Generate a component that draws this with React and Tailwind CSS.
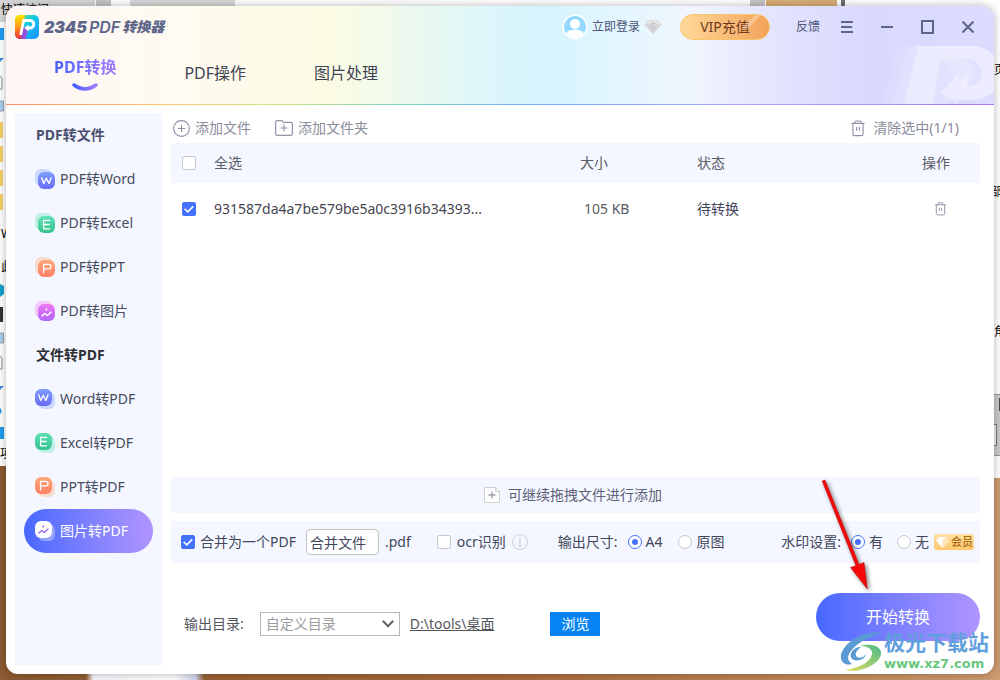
import { useState } from 'react';
import clsx from 'clsx';

const GROUPS = [
  {
    title: 'PDF转文件',
    titleClass: 'text-[#4b5070]',
    back: false,
    items: [
      { id: 'pdf-word', label: 'PDF转Word', kind: 'word' },
      { id: 'pdf-excel', label: 'PDF转Excel', kind: 'excel' },
      { id: 'pdf-ppt', label: 'PDF转PPT', kind: 'ppt' },
      { id: 'pdf-image', label: 'PDF转图片', kind: 'image' },
    ],
  },
  {
    title: '文件转PDF',
    titleClass: 'text-[#2e2f35]',
    back: true,
    items: [
      { id: 'word-pdf', label: 'Word转PDF', kind: 'word' },
      { id: 'excel-pdf', label: 'Excel转PDF', kind: 'excel' },
      { id: 'ppt-pdf', label: 'PPT转PDF', kind: 'ppt' },
      { id: 'image-pdf', label: '图片转PDF', kind: 'image' },
    ],
  },
];

const KINDS = {
  word: { from: '#7d9dff', to: '#6a6cf6', d: 'M4.6 6.500l2 5.700 2.600-5.200 2.600 5.200 2.200-5.700' },
  excel: { from: '#5fdfb6', to: '#35c48e', d: 'M12.5 5H6.5v8.500h6M6.500 9.200h5.500' },
  ppt: { from: '#ffa878', to: '#ff7f66', d: 'M6.5 13.5V5h5.200a2.300 2.300 0 0 1 0 4.600H6.500' },
  image: { from: '#ee78f4', to: '#b266f8', d: 'M4.800 12.800l2.800-2.600 2.600 2 3.800-3.400' },
};

const KindIcon = ({ id, kind, back, active }) => {
  const k = KINDS[kind];
  const offset = back ? 0 : 3;
  return (
    <svg width="20" height="20" viewBox="0 0 20 20" className="shrink-0" aria-hidden="true">
      <defs>
        <linearGradient id={id} x1="0" y1="0" x2="0" y2="1">
          <stop offset="0" stopColor={k.from} />
          <stop offset="1" stopColor={k.to} />
        </linearGradient>
      </defs>
      <rect
        x={back ? 3 : 0}
        y={back ? 3 : 0}
        width="17"
        height="17"
        rx="6"
        fill={active ? '#fff' : k.from}
        opacity="0.35"
      />
      <rect x={offset} y={offset} width="17" height="17" rx="6" fill={active ? '#fff' : `url(#${id})`} />
      <g transform={`translate(${offset - 0.9} ${offset - 0.7})`}>
        <path
          d={k.d}
          fill="none"
          stroke={active ? '#9a63f0' : '#fff'}
          strokeWidth="1.3"
          strokeLinecap="round"
          strokeLinejoin="round"
        />
        {kind === 'image' && <circle cx="9.2" cy="6.3" r="1" fill={active ? '#9a63f0' : '#fff'} />}
      </g>
    </svg>
  );
};

const TrashIcon = ({ className }) => (
  <svg viewBox="0 0 16 18" className={className} fill="none" stroke="#8f91a8" strokeWidth="1.2" aria-hidden="true">
    <path d="M1 3.6h14M4.8 3.4V2.2Q4.8 1 6 1h4q1.2 0 1.2 1.2v1.2M2.6 3.8v11Q2.6 16.6 4.4 16.6h7.2q1.8 0 1.8-1.8v-11M6.5 7.5v4M9.5 7.5v4" />
  </svg>
);

const Check = ({ id, label, ...props }) => (
  <span className="relative block size-[14px] shrink-0">
    <input
      id={id}
      type="checkbox"
      aria-label={label}
      className="peer block size-[14px] appearance-none rounded-[2px] border border-[#c6c8cc] bg-white checked:border-[#4571ff] checked:bg-[#4571ff]"
      {...props}
    />
    <svg
      viewBox="0 0 14 14"
      className="pointer-events-none absolute inset-0 hidden size-[14px] peer-checked:block"
      fill="none"
      stroke="#fff"
      strokeWidth="1.6"
    >
      <path d="M2.6 6.8l3.2 3 5.4-5.4" />
    </svg>
  </span>
);

const Radio = ({ label, ...props }) => (
  <label className="flex items-center gap-1">
    <span className="relative block size-[14px]">
      <input
        type="radio"
        className="peer block size-[14px] appearance-none rounded-full border border-[#c6c8cc] bg-white checked:border-[#4571ff]"
        {...props}
      />
      <span className="pointer-events-none absolute inset-1 hidden rounded-full bg-[#4571ff] peer-checked:block" />
    </span>
    {label}
  </label>
);

const Desktop = () => (
  <div className="absolute inset-0 overflow-hidden bg-linear-to-r from-[#8a5a32] via-[#a8693a] to-[#cd9b70] text-xs text-black">
    <div className="absolute bottom-0 left-[86px] h-[6px] w-[118px] bg-[linear-gradient(90deg,transparent,#f4f5fa_6%,#fff_75%,#cdd3ea_93%,transparent)]" />
    <div className="absolute top-0 left-0 h-[466px] w-1/2 bg-white" />
    <div className="absolute top-0 right-0 h-[478px] w-1/2 bg-white" />
    <div className="absolute top-0 left-0 h-[22px] w-[95px] bg-[#d6d6d6]" />
    <div className="absolute top-0 left-[96px] h-[6px] w-[15px] bg-[#c4c4c4]" />
    <div className="absolute top-0 left-[130px] h-[6px] w-[105px] bg-[#d6d6d6]" />
    <div className="absolute top-0 right-[235px] h-[6px] w-[15px] bg-[#c4c4c4]" />
    <div className="absolute top-0 right-[163px] h-[6px] w-[71px] bg-[#d9ae76]" />
    <div className="absolute top-0 right-[155px] h-[6px] w-[4px] bg-[#707070]" />
    <span className="absolute top-[2px] left-px leading-4">快速访问</span>
    <span className="absolute top-[226px] left-px leading-4">W</span>
    <span className="absolute top-[259px] left-px leading-4">此</span>
    <span className="absolute top-[446px] left-0 leading-4">项</span>
    <span className="absolute top-[62px] left-[994px] leading-4">页</span>
    <span className="absolute top-[184px] left-[990px] leading-4">部</span>
    <span className="absolute top-[324px] left-[994px] leading-4">角</span>
    <div className="absolute top-[394px] right-0 h-[62px] w-2 border-y border-[#999] bg-[#c9c9c9]" />
    <div className="absolute top-[398px] right-0 h-[13px] w-px bg-[#4a4a4a]" />
    <div className="absolute top-[424px] right-[3px] h-[22px] w-3 border border-[#777] bg-[#efefef]" />
    <svg width="6" height="466" className="absolute top-0 left-0" aria-hidden="true">
      <path d="M0 28h4v12H0zM0 427h4v12H0z" fill="#1f9cf0" />
      <path d="M0 58h4l-4 4zM0 386h4l-4 4z" fill="#3f8fd6" />
      <path d="M0 76l2 2v11H0M0 356l2 2v11H0" fill="#fff" stroke="#888" />
      <path d="M0 101h3.500v10H0M0 333h3.500v10H0" fill="#a9cdf3" stroke="#9aa2ab" />
      <path d="M0 122h3v16H0zM0 146h3v16H0zM0 170h3v16H0zM0 194h3v16H0z" fill="#f3cf63" />
      <path d="M0 284l4 2v8l-4 3z" fill="#13a1cf" />
      <path d="M0 307h3v15H0z" fill="#333" />
      <circle cx="-2" cy="411" r="3.500" fill="#1597ef" />
    </svg>
  </div>
);

const Header = () => (
  <header className="relative overflow-hidden rounded-t-[12px] bg-[linear-gradient(90deg,#fff6f4_0%,#fefaf2_15%,#fdfbe8_27%,#fbfbe3_33%,#eefaee_40%,#dcf6fa_49%,#d6f4fe_55%,#e1f6fe_61%,#f0f6fe_69%,#e3e4fe_78%,#d9d9fe_87%,#dcdcfe_100%)]">
    <svg width="118" height="60" viewBox="0 0 118 60" className="absolute right-0 bottom-0" aria-hidden="true">
      <g fill="#fff">
        <path d="M22 1h76a27 27 0 0 1 0 54H75l-3 5H6z" opacity=".1" />
        <path d="M32 1h66a27 27 0 0 1 0 54H75l-2 5H16z" opacity=".12" />
        <path d="M42 1h54a27 27 0 0 1 2 54H82v5l-17-13 17-17v9l9-9v11h4a14 14 0 0 0 0-27H65l-9 46H28z" opacity=".35" />
        <path d="M66 14h18a14 14 0 0 1 0 28" opacity=".15" />
      </g>
    </svg>
    <div className="relative flex h-[42px] items-center pr-5 pl-[9px]">
      <svg width="24" height="24" viewBox="0 0 24 24" aria-hidden="true">
        <defs>
          <linearGradient id="logo-l" x1="0" y1="0" x2="0" y2="1">
            <stop offset="0" stopColor="#ffe600" />
            <stop offset=".5" stopColor="#ff9a1c" />
            <stop offset="1" stopColor="#f5243d" />
          </linearGradient>
          <linearGradient id="logo-r" x1="0" y1="0" x2="1" y2="1">
            <stop offset="0" stopColor="#7be04e" />
            <stop offset=".45" stopColor="#12cbe8" />
            <stop offset="1" stopColor="#1b8dff" />
          </linearGradient>
        </defs>
        <rect width="24" height="24" rx="5" fill="url(#logo-r)" />
        <path d="M5 0h5L6 24H5A5 5 0 0 1 0 19V5a5 5 0 0 1 5-5z" fill="url(#logo-l)" />
        <path d="M5.500 24L8 12l5 1-2 11z" fill="#9a4fd8" />
        <path d="M7.500 4H15a5.300 5.300 0 0 1 0 10.600h-1.500v2L9.300 13l4.200-3.600v2H15a2.200 2.200 0 0 0 0-4.400H9.800L7 20H4.300z" fill="#fff" />
      </svg>
      <h1 className="ml-[5px] flex items-center gap-[2px] text-base leading-6 text-[#5d6589] italic">
        <span className="font-[Inter] font-black">2345</span>
        <span className="font-[Inter] font-semibold">PDF</span>
        <span className="text-sm font-black">转换器</span>
      </h1>
      <div className="ml-auto flex items-center text-xs text-[#4d5478]">
        <button className="flex items-center gap-1">
          <svg width="26" height="26" viewBox="0 0 26 26" aria-hidden="true">
            <circle cx="13" cy="13" r="12.500" fill="#fff" />
            <circle cx="13" cy="13" r="11" fill="#96d8ff" />
            <circle cx="13" cy="10" r="5" fill="#fff" />
            <path d="M4 19.500C6 16.500 9 15.500 13 15.500s7 1 9 4A11 11 0 0 1 4 19.500z" fill="#fff" />
          </svg>
          立即登录
          <svg width="18" height="15" viewBox="0 0 18 15" aria-hidden="true">
            <path d="M4 0h10l4 4.500L9 14 0 4.500z" fill="#d6d5d7" />
            <path d="M4 0h10l4 4.500H0z" fill="#e4e3e4" />
            <path d="M11 3.500H8.500a1.300 1.300 0 0 0 0 2.600h1a1.300 1.300 0 0 1 0 2.600H7" fill="none" stroke="#c0bfc2" />
          </svg>
        </button>
        <button className="relative ml-[18px] h-[26px] w-[90px] overflow-hidden rounded-full border border-[#fbc46c] bg-linear-to-r from-[#ffd898] to-[#f2a35a] text-sm leading-6 text-[#70391f]">
          <svg width="24" height="14" viewBox="0 0 24 14" className="absolute top-0 right-1" aria-hidden="true">
            <path d="M14 0h6L6 14H0z" fill="#fff" opacity=".3" />
          </svg>
          VIP充值
        </button>
        <button className="ml-[26px]">反馈</button>
        <div className="ml-[21px] flex items-center gap-7 text-[#5d6589]">
          <button aria-label="菜单">
            <svg width="12" height="12" viewBox="0 0 12 12" fill="none" stroke="currentColor" strokeWidth="2">
              <path d="M0 1h12M0 6h11M0 11h12" />
            </svg>
          </button>
          <button aria-label="最小化">
            <svg width="12" height="12" viewBox="0 0 12 12" fill="none" stroke="currentColor" strokeWidth="2">
              <path d="M0 6h12" />
            </svg>
          </button>
          <button aria-label="最大化">
            <svg width="13" height="14" viewBox="0 0 13 14" fill="none" stroke="currentColor" strokeWidth="2">
              <path d="M1 1h11v12H1z" />
            </svg>
          </button>
          <button aria-label="关闭">
            <svg width="12" height="12" viewBox="0 0 12 12" fill="none" stroke="currentColor" strokeWidth="2">
              <path d="M.5.500l11 11M11.500.500l-11 11" />
            </svg>
          </button>
        </div>
      </div>
    </div>
    <nav className="relative flex h-[56px] items-start gap-[68px] pt-[7px] pl-12 text-base leading-6 text-[#3f4356]">
      <button className="flex flex-col items-center gap-1">
        <span className="bg-linear-to-r from-[#4360ff] to-[#a27bff] bg-clip-text font-bold text-transparent">PDF转换</span>
        <svg width="26" height="8" viewBox="0 0 26 8" fill="none" aria-hidden="true">
          <defs>
            <linearGradient id="smile" x1="0" x2="1">
              <stop offset="0" stopColor="#4360ff" />
              <stop offset="1" stopColor="#a27bff" />
            </linearGradient>
          </defs>
          <path d="M2 2q11 8 22 0" stroke="url(#smile)" strokeWidth="3.500" strokeLinecap="round" />
        </svg>
      </button>
      <button className="mt-[6px]">PDF操作</button>
      <button className="mt-[6px]">图片处理</button>
    </nav>
    <div className="relative h-px bg-[linear-gradient(90deg,#ff8f70,#ffc06a_14%,#d6e27a_26%,#7fd6c0_40%,#7ba5ff_55%,#a9a6fb_75%,#a97bf5)]" />
  </header>
);

const Sidebar = ({ active, onSelect }) => (
  <aside className="w-[147px] shrink-0 bg-[#f4f7ff] px-[9px] text-sm text-[#474b60]">
    {GROUPS.map((group) => (
      <section key={group.title}>
        <h2 className={clsx('flex h-11 items-center pl-3 font-bold', group.titleClass)}>{group.title}</h2>
        {group.items.map((item) => (
          <button
            key={item.id}
            onClick={() => onSelect(item.id)}
            className={clsx(
              'flex h-11 w-full items-center gap-[5px] rounded-full pl-[11px]',
              active === item.id && 'bg-linear-to-r from-[#4768ff] to-[#b094ff] text-white'
            )}
          >
            <KindIcon id={item.id} kind={item.kind} back={group.back} active={active === item.id} />
            {item.label}
          </button>
        ))}
      </section>
    ))}
  </aside>
);

const FileTable = () => (
  <table className="w-full table-fixed text-left text-sm text-[#5a5c66]">
    <colgroup>
      <col className="w-[43px]" />
      <col />
      <col className="w-[117px]" />
      <col className="w-[225px]" />
      <col className="w-[58px]" />
    </colgroup>
    <thead>
      <tr className="h-10 bg-[#f4f7ff]">
        <th className="pl-[11px] font-normal"><Check id="all" label="全选" /></th>
        <th className="font-normal"><label htmlFor="all">全选</label></th>
        <th className="font-normal">大小</th>
        <th className="font-normal">状态</th>
        <th className="font-normal">操作</th>
      </tr>
    </thead>
    <tbody>
      <tr className="h-[52px]">
        <td className="pl-[11px]"><Check label="931587da4a7be579be5a0c3916b34393" defaultChecked /></td>
        <td className="text-[#45464f]">931587da4a7be579be5a0c3916b34393...</td>
        <td className="pl-1">105 KB</td>
        <td className="text-[#3f435a]">待转换</td>
        <td className="pl-3">
          <button aria-label="删除" className="block"><TrashIcon className="h-[14px] w-[13px]" /></button>
        </td>
      </tr>
    </tbody>
  </table>
);

const Options = () => (
  <div className="flex h-[42px] items-center bg-[#f4f7ff] pr-[6px] pl-[10px] text-sm text-[#42465c]">
    <Check id="merge" defaultChecked />
    <label htmlFor="merge" className="ml-[5px]">合并为一个PDF</label>
    <input
      aria-label="合并文件"
      defaultValue="合并文件"
      className="ml-[10px] h-[26px] w-[73px] rounded-[4px] border border-[#c4c4c4] bg-white px-[3px]"
    />
    <span className="ml-[6px]">.pdf</span>
    <span className="ml-[26px]"><Check id="ocr" /></span>
    <label htmlFor="ocr" className="ml-[6px]">ocr识别</label>
    <svg width="16" height="16" viewBox="0 0 16 16" className="ml-[6px]" fill="none" stroke="#cfd1d8" aria-hidden="true">
      <circle cx="8" cy="8" r="7.500" />
      <path d="M8 3.500v1.500M6.800 7H8v5M6.500 12h3" strokeWidth="1.300" />
    </svg>
    <fieldset className="ml-[30px] flex items-center gap-4">
      <span className="-mr-[6px]">输出尺寸:</span>
      <Radio name="size" label="A4" defaultChecked />
      <Radio name="size" label="原图" />
    </fieldset>
    <fieldset className="ml-auto flex items-center gap-[14px]">
      <span className="-mr-1">水印设置:</span>
      <Radio name="mark" label="有" defaultChecked />
      <Radio name="mark" label="无" />
    </fieldset>
    <span className="ml-[5px] flex h-4 w-10 items-center gap-[2px] rounded-[3px] bg-linear-to-b from-[#ffe0a0] to-[#ffc870] pl-[2px] text-[11px] font-medium text-[#a96a15]">
      <svg width="13" height="11" viewBox="0 0 13 11" aria-hidden="true">
        <path d="M3 0h7l3 3.500L6.500 11 0 3.500z" fill="#fff" />
        <path d="M6.500 3.500L10 0l3 3.500L6.500 11z" fill="#ffe6b8" />
      </svg>
      会员
    </span>
  </div>
);

const Watermark = () => (
  <div className="pointer-events-none absolute right-[5px] bottom-0 flex items-center gap-[2px]">
    <svg width="42" height="40" viewBox="0 0 42 40" aria-hidden="true">
      <defs>
        <linearGradient id="swirl" x1="0" y1="1" x2="1" y2="0">
          <stop offset="0" stopColor="#e2de5a" />
          <stop offset="1" stopColor="#4cb98b" />
        </linearGradient>
      </defs>
      <path d="M42 1C24-2 4 10 1 23c-1 7 4 11 11 9-5-3-5-8-1-13C18 10 30 4 42 1z" fill="#5b9bd3" />
      <path d="M21 15c-8 0-13 8-9 12 4 3 13 1 14-5-2 3-6 5-9 3-3-3 0-7 4-10z" fill="#5b9bd3" />
      <path d="M20 14c8-3 20-1 21 6 1 10-15 18-27 19l-9-1c15-2 28-9 27-18-1-4-6-6-12-6z" fill="url(#swirl)" />
    </svg>
    <div className="flex flex-col">
      <span className="text-[21px] leading-6 font-bold text-[#619fdc]">极光下载站</span>
      <span className="font-['DejaVu_Sans'] text-[13px] leading-5 font-bold text-[#69c77f]">www.xz7.com</span>
    </div>
  </div>
);

const App = () => {
  const [active, setActive] = useState('image-pdf');

  return (
    <div className="relative flex min-h-screen flex-col p-[6px] font-['Noto_Sans','Noto_Sans_CJK_SC',sans-serif]">
      <Desktop />
      <div className="relative flex flex-1 flex-col rounded-[12px] bg-white shadow-[0_0_8px_rgba(0,0,0,0.3)]">
        <Header />
        <div className="flex flex-1 gap-[9px] pt-2 pr-[14px] pb-[9px] pl-[9px]">
          <Sidebar active={active} onSelect={setActive} />
          <main className="flex min-w-0 flex-1 flex-col">
            <div className="flex h-[30px] items-center gap-6 pr-[21px] pl-[2px] text-sm text-[#8a8c9c]">
              <button className="flex items-center gap-[5px]">
                <svg width="17" height="17" viewBox="0 0 17 17" fill="none" stroke="#8f91a8" strokeWidth="1.100" aria-hidden="true">
                  <circle cx="8.500" cy="8.500" r="7.900" />
                  <path d="M8.500 4.800v7.400M4.800 8.500h7.400" />
                </svg>
                添加文件
              </button>
              <button className="flex items-center gap-[5px]">
                <svg width="18" height="16" viewBox="0 0 17 15" fill="none" stroke="#8f91a8" strokeWidth="1.100" aria-hidden="true">
                  <path d="M.6 13V2Q.6.600 2 .600h4.500l1.500 1.600h7q1.400 0 1.400 1.400V13q0 1.400-1.400 1.400H2Q.6 14.400.6 13zM8.500 4.300v6.400M5.300 7.500h6.400" />
                </svg>
                添加文件夹
              </button>
              <button className="ml-auto flex items-center gap-[7px]">
                <TrashIcon className="h-[17px] w-4" />
                清除选中(1/1)
              </button>
            </div>
            <div className="flex-1">
              <FileTable />
            </div>
            <div className="flex h-9 items-center justify-center gap-2 bg-[#f4f7ff] pr-[5px] text-sm text-[#5c6079]">
              <svg width="16" height="16" viewBox="0 0 16 16" fill="none" stroke="#cfd0d4" aria-hidden="true">
                <path d="M.5.500h11l4 4v11H.5zM11.500.500v4h4" fill="#fff" />
                <path d="M8 4.500v7M4.500 8h7" stroke="#9a9ca6" strokeWidth="1.300" />
              </svg>
              可继续拖拽文件进行添加
            </div>
            <div className="mt-2">
              <Options />
            </div>
            <div className="mt-[30px] mb-6 flex items-center pl-[13px] text-sm text-[#55565c]">
              <div className="flex items-center pt-[14px]">
                <label htmlFor="target">输出目录:</label>
                <span className="relative ml-4 block">
                  <select
                    id="target"
                    className="block h-6 w-[140px] appearance-none border border-[#b8b8b8] bg-white pl-[5px] text-[#9c9c9c]"
                  >
                    <option>自定义目录</option>
                  </select>
                  <svg
                    viewBox="0 0 12 8"
                    className="pointer-events-none absolute top-2 right-[6px] h-2 w-3"
                    fill="none"
                    stroke="#666"
                    strokeWidth="2"
                  >
                    <path d="M.8.800L6 6.200 11.200.800" />
                  </svg>
                </span>
                <a href="#target" className="ml-[10px] underline">D:\tools\桌面</a>
                <button className="ml-14 h-6 w-[50px] bg-[#0683f3] text-white">浏览</button>
              </div>
              <button className="ml-auto h-12 w-[164px] rounded-full bg-linear-to-r from-[#4768ff] to-[#b094ff] text-base text-white">
                开始转换
              </button>
            </div>
          </main>
        </div>
        <Watermark />
        <svg
          width="54"
          height="116"
          viewBox="0 0 54 116"
          className="pointer-events-none absolute right-[119px] bottom-[79px] drop-shadow-[2px_2px_2px_rgba(0,0,0,0.5)]"
          aria-hidden="true"
        >
          <path d="M1.200 2L4 1l34 84.500 5-2 3.300 26.500L29.500 88.500l5.500-1.800z" fill="#f60808" stroke="#c00d0d" strokeWidth=".6" />
        </svg>
      </div>
    </div>
  );
};

export default App;
